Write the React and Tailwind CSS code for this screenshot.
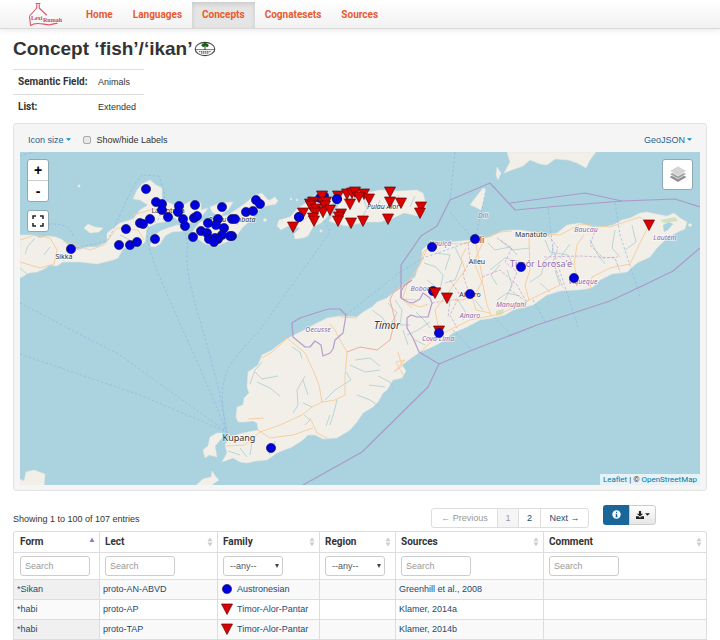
import React from "react";

const CIRCLES = [
  [146, 189], [156, 202], [162, 204], [162, 210], [168, 217], [179, 206], [178, 212], [195, 205],
  [183, 219], [185, 226], [194, 218], [197, 216], [150, 219], [140, 223], [143, 224], [126, 229],
  [119, 245], [130, 245], [137, 242], [155, 239], [71, 249], [193, 237], [222, 207], [208, 223],
  [218, 219], [216, 225], [201, 231], [207, 233], [224, 228], [232, 219], [235, 219], [232, 236],
  [222, 235], [209, 239], [215, 238], [218, 239], [214, 242], [230, 236], [246, 212], [253, 211],
  [256, 200], [260, 204], [320, 198], [324, 196], [337, 199], [299, 217], [432, 247], [475, 239],
  [521, 267], [574, 278], [470, 294], [433, 291], [271, 448],
];

const TRIANGLES = [
  [322, 196], [303, 213], [293, 227], [313, 202], [310, 204], [311, 206], [323, 203], [326, 202],
  [325, 206], [316, 209], [323, 212], [330, 210], [315, 213], [313, 218], [314, 221], [338, 196],
  [347, 194], [352, 193], [355, 192], [364, 194], [359, 197], [369, 199], [350, 204], [341, 214],
  [339, 217], [338, 221], [351, 223], [363, 221], [388, 219], [390, 192], [390, 202], [401, 203],
  [421, 207], [420, 213], [649, 225], [435, 293], [447, 298], [439, 331],
];

const FRONT_CIRCLES = [[299, 217], [337, 199], [439, 333]];

const LAND = [
  "M229 437L243 433L258 430L257 423L253 421L245 422L238 422L236 417L237 407L243 405L244 398L249 393L247 387L248 372L258 365L262 355L272 350L282 342L292 336L304 330L317 323L327 318L340 316L357 317L363 312L372 307L377 302L387 298L393 293L403 285L415 277L418 268L422 260L422 250L430 243L450 242L470 240L490 237L502 231L510 230L520 230L533 232L545 235L557 233L567 225L580 223L593 227L603 227L613 225L622 220L630 218L640 213L647 212L656 214L667 216L674 213L680 218L687 222L685 229L680 231L667 238L657 248L650 257L637 263L627 272L612 274L600 280L593 287L587 289L577 290L560 291L547 295L533 305L513 310L505 315L493 318L480 320L467 327L453 333L440 343L430 348L420 352L410 359L402 365L406 371L402 378L393 380L387 390L383 393L378 402L373 407L363 413L357 422L350 430L337 438L323 439L315 435L308 435L304 439L300 442L290 448L284 450L277 453L267 460L256 461L247 463L240 462L233 458L222 462L227 453L225 445Z",
  "M210 437L217 433L222 433L222 438L215 446L217 457L209 455L205 458L203 450L208 446Z",
  "M195 486L203 479L211 477L212 471L216 477L219 480L213 484L212 488Z",
  "M20 479L24 481L26 472L34 470L45 474L44 488L20 488Z",
  "M20 235L33 235L40 238L47 236L56 237L63 240L70 247L78 250L88 247L97 247L107 242L107 233L120 223L133 219L140 210L148 205L140 200L133 199L137 190L142 184L150 180L156 185L162 188L162 199L174 205L173 213L165 222L157 223L147 228L145 242L140 246L130 246L123 249L118 258L113 260L97 264L80 262L63 262L57 266L50 265L44 269L37 272L29 273L20 278Z",
  "M150 246L153 237L160 231L168 228L177 225L187 226L183 231L172 232L165 236L160 244L155 247Z",
  "M172 205L183 205L191 201L201 203L201 210L208 208L202 216L190 223L180 222L172 216Z",
  "M210 207L220 203L233 202L229 209L223 213L221 217L212 212Z",
  "M188 238L193 231L200 222L207 219L217 217L228 215L240 207L247 202L253 196L262 193L268 200L277 200L276 204L266 206L257 211L252 219L243 227L237 235L229 241L217 246L205 244L198 239Z",
  "M84 228L88 224L95 227L103 228L99 232L90 233Z",
  "M270 200L275 197L278 201L274 205Z",
  "M277 226L279 220L290 217L298 208L306 203L313 196L323 193L333 201L330 210L327 217L321 223L313 227L308 236L303 238L295 239L294 234L300 228L288 226L281 230Z",
  "M329 221L333 214L339 204L338 198L343 194L355 190L370 192L380 190L398 191L417 190L423 193L426 204L426 209L418 216L404 213L393 218L380 222L365 222L347 226L337 224Z",
  "M507 152L510 162L504 173L512 170L523 166L530 160L540 164L547 165L555 159L568 160L577 163L586 168L590 160L596 152Z",
  "M497 167L501 173L498 180L496 175Z",
  "M470 205L476 197L483 188L486 189L484 199L481 210L475 207Z",
];

const FERRIES = [
  "M227 433C190 340 160 285 150 250S158 228 160 215L165 195L159 176L142 175C128 190 120 220 107 241L72 249",
  "M227 433C215 350 180 280 188 245L184 225",
  "M226 430C216 375 226 366 260 330L330 232L319 209",
  "M20 303L120 355L227 432",
  "M20 354L140 395L227 432",
  "M20 156L34 152M40 225C60 222 72 225 73 238",
  "M455 152L450 200M475 239L482 210L486 189",
  "M346 315L400 272L423 258L475 240",
  "M548 208L553 250L578 327M615 203L620 235L640 296",
  "M453 330L472 350M494 317L511 335M533 300L545 322M450 212L472 238",
];

const BORDERS = [
  "M401 298L401 265L421 236L437 226L450 200L490 183L515 210L560 206L622 201L675 199L700 207",
  "M510 203L585 193L622 201",
  "M700 248L673 271L640 287L610 301L537 325L470 351L439 364L428 387L362 452L303 485",
  "M439 364L419 352L416 345L413 338L407 328L407 318L411 315L417 317L428 317L432 303L430 298L423 293L420 299L413 303L408 302L401 298L401 291L405 285L412 280",
  "M292 323L300 318L328 309L340 309L346 315L343 333L335 340L333 349L330 353L323 356L321 345L315 341L310 347L305 347L293 337Z",
];

const ROADS = [
  "M226 446L245 445L260 432L280 425L302 415L312 407L322 402L335 400L345 395L345 377L347 352L340 340L335 330L330 324",
  "M322 402L319 385L313 370L305 353L293 343L287 338L280 345L272 352L262 358",
  "M258 430L270 438L293 435L313 428M310 418L317 433L327 438M248 419L264 418",
  "M418 262L425 250L440 243L460 244L480 240L500 232L512 231M530 233L560 235L580 224L610 227L640 217L648 224",
  "M590 289L592 277L610 268L630 264L638 247L648 227M578 280L574 265L577 245L584 235",
  "M529 238L530 270L525 285L529 300L517 310M475 240L479 260L483 280L475 295L462 300L448 300",
  "M484 240L474 262L483 285L487 305L492 317M470 290L476 310L490 313M439 330L435 310L450 290L465 270L461 258L466 248",
  "M20 240L35 235L50 238L57 250L54 264L40 268L20 262M63 241L90 250L104 245L117 228L138 230L144 240M133 215L150 210L160 208M350 206L340 196M303 220L320 210",
  "M420 352L439 335L470 320L500 314L560 285M430 242L420 265L408 282L402 300M398 352L402 366L394 372L405 360L396 362L403 375",
  "M408 303L420 307L428 304M412 308L402 299L416 300M245 206L242 215L237 225M340 317L357 318",
];

const RIVERS = [
  "M255 372L262 379L278 376M257 382L270 388L280 396M262 362L255 370L250 384M293 413L298 405L297 390L305 376M303 380L308 395M292 347L300 352L302 359",
  "M304 415L310 420L305 425M325 400L335 390L351 380L346 372M337 400L334 412L330 425M326 426L330 415M312 407L303 403",
  "M357 395L370 400L380 407M369 385L385 387M378 376L390 382L395 391M355 360L370 358L380 366M350 365L365 372L380 370",
  "M372 310L383 318L389 330M388 303L397 313L390 326M395 300L402 310L400 325L410 325M407 335L418 330L430 322M408 345L403 330",
  "M240 448L247 457M252 442L250 455M268 447L270 455M228 451L240 455M275 441L273 450",
  "M424 263L436 267L443 275L440 290M436 253L450 255L445 270M455 247L462 262L455 280L445 283M427 280L440 290L450 305",
  "M488 243L495 250L510 247L517 255M500 240L512 250L530 248M490 270L505 258L523 262M497 285L491 275L500 265",
  "M545 240L550 252L568 255L573 265M553 245L552 255L543 262M530 282L541 275L545 262M507 270L512 285L505 300M560 258L570 244M590 240L598 255L605 264M615 230L612 248L620 257M632 225L636 242L625 250",
  "M497 300L507 293L520 296M475 300L483 310M540 283L550 292M555 270L560 285M415 340L425 345M458 300L466 313L463 320M416 312L424 320L430 328",
  "M35 238L28 246L25 254M50 247L44 255M120 235L130 240M20 268L28 275M362 195L367 208L362 218M398 195L402 208M415 196L410 207M380 200L376 210",
];

const DISTRICTS = [
  "M468 243L470 260L463 275L468 290L455 300M497 238L512 248L505 262L517 272L510 290L524 300M544 257L580 256L615 258L620 272M450 280L460 295L450 315L457 328",
  "M482 277L500 270L517 285L527 303M432 303L450 300L448 318M548 235L558 248L553 262L563 288M596 228L590 245L603 258L618 257",
];

function Place({ x, y, children, district = false, size = 7, className = "" }) {
  return (
    <text
      x={x}
      y={y}
      fontSize={size}
      textAnchor="middle"
      paintOrder="stroke"
      stroke="#ffffff"
      strokeOpacity="0.6"
      strokeWidth="1.5"
      fill={district ? "#9068a8" : "#333333"}
      className={"font-['Noto_Sans',sans-serif] " + className}
    >
      {children}
    </text>
  );
}

function Triangle({ x, y }) {
  return <path d={`M${x - 5.5} ${y - 5}H${x + 5.5}L${x} ${y + 5.5}Z`} fill="#dd0000" stroke="#5a0a0a" strokeWidth="0.7" />;
}

function Dot({ x, y }) {
  return <circle cx={x} cy={y} r="4.6" fill="#0000dd" stroke="#10104a" strokeWidth="0.6" />;
}

function IslandMap() {
  return (
    <svg viewBox="20 152 680 333" preserveAspectRatio="xMidYMid slice" className="block h-[333px] w-full bg-[#aad3df]" role="img" aria-label="Map">
      <g fill="#f2efe9" stroke="#e4e2dc" strokeWidth="0.5" strokeLinejoin="round">
        {LAND.map((d) => <path key={d} d={d} />)}
        <circle cx="79" cy="186" r="1.2" />
        <circle cx="265" cy="220" r="1.6" />
        <circle cx="281" cy="222" r="1.2" />
        <circle cx="321" cy="231" r="1.2" />
        <circle cx="291" cy="199" r="1" />
        <circle cx="297" cy="200" r="1" />
        <circle cx="690" cy="225" r="1.6" />
      </g>
      <path d="M663 225L669 222L673 224L668 230L664 232Z" fill="#aad3df" />
      <path d="M660 220L675 217L678 221L664 223ZM496 311L504 309L503 314L496 316ZM67 244L74 248L72 255L66 252Z" fill="#cfe3c0" />
      <g fill="none" stroke="#a3c8cf" strokeWidth="0.7">{RIVERS.map((d) => <path key={d} d={d} />)}</g>
      <g fill="none" stroke="#f6cb98" strokeWidth="0.9" strokeLinejoin="round">{ROADS.map((d) => <path key={d} d={d} />)}</g>
      <path d="M347 352L360 347L377 350L390 340L395 320L390 300L393 293L410 281" fill="none" stroke="#f0a594" strokeWidth="0.9" />
      <g fill="none" stroke="#c3a3cd" strokeWidth="0.7" strokeDasharray="3 1.5">{DISTRICTS.map((d) => <path key={d} d={d} />)}</g>
      <g fill="none" stroke="#8fb4df" strokeWidth="0.7" strokeDasharray="2.5 2">{FERRIES.map((d) => <path key={d} d={d} />)}</g>
      <g fill="none" stroke="#ac8fc4" strokeOpacity="0.85" strokeWidth="1.2" strokeLinejoin="round">{BORDERS.map((d) => <path key={d} d={d} />)}</g>
      <Place x={64} y={259}>Sikka</Place>
      <Place x={168} y={213}>Larantuka</Place>
      <Place x={232} y={222} className="italic">Pulau Lembata</Place>
      <Place x={383} y={209} className="italic">Pulau Alor</Place>
      <Place x={387} y={329} size={10} className="italic">Timor</Place>
      <Place x={239} y={441} size={9}>Kupang</Place>
      <Place x={478} y={243} size={8}>Dili</Place>
      <Place x={531} y={237}>Manatuto</Place>
      <Place x={477} y={264}>Aileu</Place>
      <Place x={470} y={297}>Ainaro</Place>
      <Place x={541} y={267} size={9} district>Timór Lorosa'e</Place>
      <Place x={483} y={218} district className="italic">Dili</Place>
      <Place x={440} y={246} district className="italic">Liquiçá</Place>
      <Place x={586} y={232} district className="italic">Baucau</Place>
      <Place x={665} y={240} district className="italic">Lautém</Place>
      <Place x={583} y={284} district className="italic">Viqueque</Place>
      <Place x={511} y={307} district className="italic">Manufahi</Place>
      <Place x={470} y={318} district className="italic">Ainaro</Place>
      <Place x={426} y={291} district className="italic">Bobonaro</Place>
      <Place x={438} y={341} district className="italic">Cova Lima</Place>
      <Place x={318} y={332} district className="italic">Oecusse</Place>
      {CIRCLES.map(([x, y], i) => <Dot key={i} x={x} y={y} />)}
      {TRIANGLES.map(([x, y], i) => <Triangle key={i} x={x} y={y} />)}
      {FRONT_CIRCLES.map(([x, y], i) => <Dot key={i} x={x} y={y} />)}
    </svg>
  );
}

function Logo() {
  return (
    <svg viewBox="0 0 34 26" className="h-[26px] w-[34px]" role="img" aria-label="LexiRumah">
      <g fill="none" stroke="#d9566a" strokeWidth="1.1" strokeLinejoin="round" strokeLinecap="round">
        <path d="M8 1.5H12M8.8 2.5V6L2 13.5M11.2 2.5V6L18.5 13M1.5 14.5L2.5 23.5C9 18.5 17 23.5 22 22.8C26 22 28 21 29 21.5" />
      </g>
      <g fill="#cf4258" className="font-['Liberation_Serif',serif] font-bold">
        <text x="3" y="18" fontSize="6">Lexi</text>
        <text x="15" y="20" fontSize="6">Rumah</text>
      </g>
    </svg>
  );
}

function ConcepticonMark() {
  return (
    <svg viewBox="0 0 22 16" className="h-4 w-[22px]" role="img" aria-label="Concepticon">
      <ellipse cx="11" cy="8" rx="9.8" ry="6.6" fill="#ffffff" stroke="#444444" strokeWidth="1.1" />
      <path d="M2 8.6H20" stroke="#555555" strokeWidth="0.8" />
      <path d="M10.5 5H11.5V9H10.5Z" fill="#3b3b20" />
      <circle cx="9.3" cy="4.2" r="1.7" fill="#146414" />
      <circle cx="11.2" cy="3.2" r="1.8" fill="#146414" />
      <circle cx="13" cy="4.4" r="1.6" fill="#146414" />
      <path d="M5 10.6H17M7 12.2H15" stroke="#777777" strokeWidth="1.2" strokeDasharray="1.4 0.5" />
    </svg>
  );
}

function Caret({ className = "" }) {
  return <svg viewBox="0 0 6 3" className={"h-[3px] w-[5px] " + className} aria-hidden="true"><path d="M0 0H6L3 3Z" fill="currentColor" /></svg>;
}

function Sorter({ asc }) {
  return (
    <svg viewBox="0 0 6 10" className="h-[10px] w-[6px] shrink-0" aria-hidden="true">
      {asc ? <path d="M0.5 5L3 0.5L5.5 5Z" fill="#8080dd" /> : <path d="M0.5 4.2L3 0.5L5.5 4.2ZM0.5 5.6L3 9.5L5.5 5.6Z" fill="#cccccc" />}
    </svg>
  );
}

const COLUMNS = [
  { name: "Form", asc: true, width: "w-[85px]" },
  { name: "Lect", width: "w-[118px]" },
  { name: "Family", select: true, width: "w-[102px]" },
  { name: "Region", select: true, width: "w-[76px]" },
  { name: "Sources", width: "w-[148px]" },
  { name: "Comment", width: "" },
];

const ROWS = [
  ["*Sikan", "proto-AN-ABVD", "Austronesian", "Greenhill et al., 2008"],
  ["*habi", "proto-AP", "Timor-Alor-Pantar", "Klamer, 2014a"],
  ["*habi", "proto-TAP", "Timor-Alor-Pantar", "Klamer, 2014b"],
];

const NAV = ["Home", "Languages", "Concepts", "Cognatesets", "Sources"];

function FilterCell({ column }) {
  return (
    <td className="h-[27px] border-b border-l border-[#dddddd] px-[5px] py-0 align-middle first:border-l-0 first:pl-[6px]">
      {column.select ? (
        <div className="relative w-[60px]">
          <select aria-label={"Filter " + column.name} className="block h-[20px] w-full appearance-none rounded-[3px] border border-[#cccccc] bg-white pl-[6px] text-[9px] text-[#555555]">
            <option>--any--</option>
          </select>
          <svg viewBox="0 0 4 4" className="pointer-events-none absolute right-[4px] top-[8px] h-[4px] w-[4px]" aria-hidden="true"><path d="M0 0H4L2 4Z" fill="#444444" /></svg>
        </div>
      ) : (
        <input type="text" placeholder="Search" aria-label={"Search " + column.name} className="block h-[20px] w-[70px] rounded-[3px] border border-[#cccccc] bg-white px-1 text-[9px] placeholder:text-[#999999]" />
      )}
    </td>
  );
}

const cell = "h-[20px] border-b border-l border-[#dddddd] px-[3px] py-0 first:border-l-0";

export default function App() {
  return (
    <div className="bg-white font-['Liberation_Sans',Arial,sans-serif] text-[9px] leading-[14px] text-[#333333]">
      <header className="flex h-[29px] border-b border-[#d8d8d8] bg-linear-to-b from-white to-[#f2f2f2] pl-7 shadow-[0_1px_6px_rgba(0,0,0,0.1)]">
        <a href="#home" className="mr-[14px] pt-[2px]"><Logo /></a>
        <nav className="flex pt-[2px] font-['Roboto',sans-serif] text-[10px] font-bold text-[#e8592f]">
          {NAV.map((item) => (
            <a key={item} href={"#" + item} className={"flex items-center px-[10px] " + (item === "Concepts" ? "bg-[#e5e5e5] shadow-[inset_0_2px_5px_rgba(0,0,0,0.125)]" : "")}>{item}</a>
          ))}
        </nav>
      </header>

      <main className="px-[13px]">
        <h1 className="flex h-10 items-center gap-[2px] text-[19px] font-bold">
          Concept ‘fish’/‘ikan’ <ConcepticonMark />
        </h1>
        <table className="w-[131px] border-collapse">
          <tbody>
            <tr className="h-[25px] border-t border-[#dddddd]">
              <th scope="row" className="pl-[5px] text-left font-['Roboto',sans-serif] text-[10px] font-bold">Semantic Field:</th>
              <td className="w-[46px] p-0">Animals</td>
            </tr>
            <tr className="h-[25px] border-t border-[#dddddd]">
              <th scope="row" className="pl-[5px] text-left font-['Roboto',sans-serif] text-[10px] font-bold">List:</th>
              <td className="p-0">Extended</td>
            </tr>
          </tbody>
        </table>

        <section className="mt-[3px] rounded-[3px] border border-[#e3e3e3] bg-[#f5f5f5] px-[6px] pb-[5px]">
          <div className="flex h-7 items-center px-2 pt-1">
            <button type="button" className="flex items-center gap-[2px] text-[#1f5f8f]">Icon size<Caret className="text-[#0088cc]" /></button>
            <label className="ml-3 flex items-center gap-[6px]">
              <input type="checkbox" className="h-2 w-2 appearance-none rounded-[2px] border border-[#aaaaaa] bg-[#e8e8e8]" />
              Show/hide Labels
            </label>
            <button type="button" className="ml-auto flex items-center gap-[2px] text-[#1f5f8f]">GeoJSON<Caret className="text-[#0088cc]" /></button>
          </div>
          <div className="relative">
            <IslandMap />
            <div className="absolute left-[7px] top-[7px] flex flex-col gap-2">
              <div className="flex w-[22px] flex-col overflow-hidden rounded-[3px] border border-[#8fa9b2] bg-white text-[14px] font-bold leading-none text-black">
                <button type="button" className="h-[21px] border-b border-[#cccccc]">+</button>
                <button type="button" className="h-5">-</button>
              </div>
              <button type="button" aria-label="Full screen" className="flex h-[22px] w-[22px] items-center justify-center rounded-[3px] border border-[#8fa9b2] bg-white">
                <svg viewBox="0 0 12 12" className="h-3 w-3" fill="none" stroke="#222222" strokeWidth="1.5"><path d="M1 4V1H4M8 1H11V4M11 8V11H8M4 11H1V8" /></svg>
              </button>
            </div>
            <button type="button" aria-label="Layers" className="absolute right-[7px] top-[7px] flex h-[31px] w-[31px] items-center justify-center rounded-[3px] border border-[#8fa9b2] bg-white">
              <svg viewBox="0 0 18 18" className="h-[18px] w-[18px]" aria-hidden="true">
                <path d="M0.5 12L9 8L17.5 12L9 17Z" fill="#8e8e8e" />
                <path d="M0.5 9L9 5L17.5 9L9 14Z" fill="#a2a2a2" stroke="#ffffff" strokeWidth="0.6" />
                <path d="M0.5 6L9 1L17.5 6L9 11Z" fill="#d4d4d4" stroke="#ffffff" strokeWidth="0.6" />
              </svg>
            </button>
            <div className="absolute bottom-0 right-0 bg-white/70 px-[3px] font-['Roboto',sans-serif] text-[8px] leading-[11px]">
              <a href="#leaflet" className="text-[#0078a8]">Leaflet</a> | © <a href="#osm" className="text-[#0078a8]">OpenStreetMap</a>
            </div>
          </div>
        </section>

        <div className="mt-[13px] flex h-[27px] items-start">
          <p className="pt-[8px]">Showing 1 to 100 of 107 entries</p>
          <div className="ml-auto mt-[4px] flex h-[20px] overflow-hidden rounded-[3px] border border-[#dddddd] text-[9px] text-[#1c4a70]">
            <button type="button" disabled className="w-[65px] text-[#999999]">← Previous</button>
            <button type="button" disabled className="w-[21px] border-l border-[#dddddd] bg-[#f5f5f5] text-[#999999]">1</button>
            <button type="button" className="w-[22px] border-l border-[#dddddd]">2</button>
            <button type="button" className="w-[48px] border-l border-[#dddddd]">Next →</button>
          </div>
          <div className="ml-[14px] mr-[51px] mt-px flex h-[20px]">
            <button type="button" aria-label="Info" className="flex w-[26px] items-center justify-center rounded-l-[3px] bg-[#1b6698]">
              <svg viewBox="0 0 9 9" className="h-[9px] w-[9px]"><circle cx="4.5" cy="4.5" r="4.2" fill="#ffffff" /><path d="M3.5 3.8H5.2V6.6H5.9V7.3H3.3V6.6H3.9V4.5H3.5ZM3.9 1.7H5.2V2.9H3.9Z" fill="#1b6698" /></svg>
            </button>
            <button type="button" aria-label="Download" className="flex w-[27px] items-center justify-center gap-px rounded-r-[3px] border border-[#cccccc] bg-linear-to-b from-white to-[#e6e6e6] text-[#222222]">
              <svg viewBox="0 0 9 9" className="h-2 w-2"><path d="M3.3 0H5.7V3H8L4.5 6.3L1 3H3.3ZM0 6H2.7L4.5 7.6L6.3 6H9V9H0Z" fill="currentColor" /></svg>
              <Caret />
            </button>
          </div>
        </div>

        <table className="w-full table-fixed border-separate border-spacing-0 rounded-t-[3px] border border-b-0 border-[#dddddd]">
          <thead>
            <tr>
              {COLUMNS.map((c) => (
                <th key={c.name} scope="col" className={"h-[21px] border-b border-l border-[#dddddd] py-0 pl-[5px] pr-1 text-left font-['Roboto',sans-serif] text-[10px] font-bold first:border-l-0 first:pl-[6px] " + c.width}>
                  <span className="flex items-center justify-between">{c.name}<Sorter asc={c.asc} /></span>
                </th>
              ))}
            </tr>
            <tr>{COLUMNS.map((c) => <FilterCell key={c.name} column={c} />)}</tr>
          </thead>
          <tbody className="text-[#1c4a70]">
            {ROWS.map(([form, lect, family, source], i) => (
              <tr key={lect} className="odd:bg-[#f9f9f9]">
                <td className={cell + (i % 2 ? " bg-[#fafafa]" : " bg-[#f0f0f0]")}><a href="#form">{form}</a></td>
                <td className={cell}><a href="#lect">{lect}</a></td>
                <td className={cell}>
                  <a href="#family" className="flex items-center gap-1">
                    <svg viewBox="0 0 12 12" className="h-3 w-3" aria-hidden="true">{family === "Austronesian" ? <Dot x={6} y={6} /> : <Triangle x={6} y={6} />}</svg>
                    {family}
                  </a>
                </td>
                <td className={cell} />
                <td className={cell}><a href="#source">{source}</a></td>
                <td className={cell} />
              </tr>
            ))}
          </tbody>
        </table>
      </main>
    </div>
  );
}
